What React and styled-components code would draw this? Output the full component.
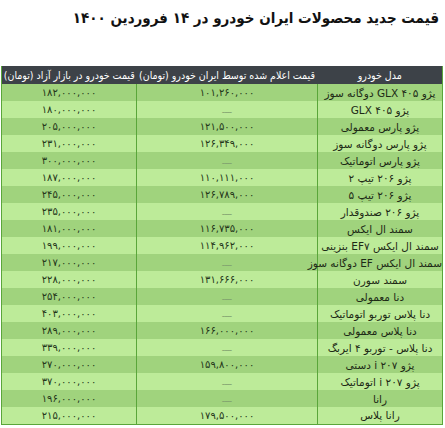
import React from 'react'
import styled, { createGlobalStyle } from 'styled-components';

const rows = [
    ['پژو GLX ۴۰۵ دوگانه سوز', '۱۰۱,۲۶۰,۰۰۰', '۱۸۲,۰۰۰,۰۰۰'],
    ['پژو GLX ۴۰۵', null, '۱۸۰,۰۰۰,۰۰۰'],
    ['پژو پارس معمولی', '۱۲۱,۵۰۰,۰۰۰', '۲۰۵,۰۰۰,۰۰۰'],
    ['پژو پارس دوگانه سوز', '۱۲۶,۳۴۹,۰۰۰', '۲۳۱,۰۰۰,۰۰۰'],
    ['پژو پارس اتوماتیک', null, '۳۰۰,۰۰۰,۰۰۰'],
    ['پژو ۲۰۶ تیپ ۲', '۱۱۰,۱۱۱,۰۰۰', '۱۸۷,۰۰۰,۰۰۰'],
    ['پژو ۲۰۶ تیپ ۵', '۱۲۶,۷۸۹,۰۰۰', '۲۴۵,۰۰۰,۰۰۰'],
    ['پژو ۲۰۶ صندوقدار', null, '۲۳۵,۰۰۰,۰۰۰'],
    ['سمند ال ایکس', '۱۱۶,۷۳۵,۰۰۰', '۱۸۱,۰۰۰,۰۰۰'],
    ['سمند ال ایکس EF۷ بنزینی', '۱۱۴,۹۶۲,۰۰۰', '۱۹۹,۰۰۰,۰۰۰'],
    ['سمند ال ایکس EF دوگانه سوز', null, '۲۱۷,۰۰۰,۰۰۰'],
    ['سمند سورن', '۱۳۱,۶۶۶,۰۰۰', '۲۲۸,۰۰۰,۰۰۰'],
    ['دنا معمولی', null, '۲۵۴,۰۰۰,۰۰۰'],
    ['دنا پلاس توربو اتوماتیک', null, '۴۰۳,۰۰۰,۰۰۰'],
    ['دنا پلاس معمولی', '۱۶۶,۰۰۰,۰۰۰', '۲۸۹,۰۰۰,۰۰۰'],
    ['دنا پلاس - توربو ۴ ایربگ', null, '۳۳۹,۰۰۰,۰۰۰'],
    ['پژو ۲۰۷ i دستی', '۱۵۹,۸۰۰,۰۰۰', '۲۷۰,۰۰۰,۰۰۰'],
    ['پژو ۲۰۷ i اتوماتیک', null, '۳۷۰,۰۰۰,۰۰۰'],
    ['رانا', null, '۱۹۶,۰۰۰,۰۰۰'],
    ['رانا پلاس', '۱۷۹,۵۰۰,۰۰۰', '۲۱۵,۰۰۰,۰۰۰'],
];

const App = () => {
    return (
        <Page>
            <GlobalStyle />
            <Title>قیمت جدید محصولات ایران خودرو در ۱۴ فروردین ۱۴۰۰</Title>
            <Table>
                <colgroup>
                    <col style={{ width: 125 }} />
                    <col style={{ width: 181 }} />
                    <col style={{ width: 135 }} />
                </colgroup>
                <thead>
                    <tr>
                        <HeadCell>مدل خودرو</HeadCell>
                        <HeadCell>قیمت اعلام شده توسط ایران خودرو (تومان)</HeadCell>
                        <HeadCell>قیمت خودرو در بازار آزاد (تومان)</HeadCell>
                    </tr>
                </thead>
                <tbody>
                    {rows.map(([name, factory, market], i) => (
                        <Row key={name} dark={i % 2 === 0}>
                            <NameCell>{name}</NameCell>
                            <PriceCell>{factory ? factory : <Dash>ــــ</Dash>}</PriceCell>
                            <PriceCell>{market}</PriceCell>
                        </Row>
                    ))}
                </tbody>
            </Table>
        </Page>
    )
}

export default App

const GlobalStyle = createGlobalStyle`
body{
    margin:0;
    background:#fff;
    font-family:"DejaVu Sans", sans-serif;
}
`;
const Page = styled.div`
direction:rtl;
padding:0 2px;
width:445px;
box-sizing:border-box;
`;
const Title = styled.h1`
margin:0;
padding:6px 4px 0 0;
height:66px;
box-sizing:border-box;
font-family:"DejaVu Sans Condensed", "DejaVu Sans", sans-serif;
font-size:15px;
line-height:24px;
font-weight:bold;
color:#111;
`;
const Table = styled.table`
width:441px;
table-layout:fixed;
border-collapse:collapse;
border-left:1px solid #5aa63a;
border-right:1px solid #5aa63a;
border-bottom:1px solid #5aa63a;
`;
const HeadCell = styled.th`
background:#3d4248;
color:#fff;
height:18px;
padding:0;
font-family:"DejaVu Sans Condensed", "DejaVu Sans", sans-serif;
font-size:10.5px;
font-weight:normal;
white-space:nowrap;
text-align:center;
overflow:visible;
`;
const Row = styled.tr`
background:${({ dark }) => (dark ? '#a0d37d' : '#bdeb99')};
height:17px;
`;
const NameCell = styled.td`
padding:0;
font-size:10.5px;
color:#1d2a16;
text-align:center;
white-space:nowrap;
border-left:1px solid #5aa63a;
`;
const PriceCell = styled.td`
padding:0;
font-size:10px;
color:#24361a;
text-align:center;
white-space:nowrap;
border-left:1px solid #5aa63a;
&:last-child{
    border-left:none;
}
`;
const Dash = styled.span`
color:#7d9c6d;
font-size:8px;
`;
